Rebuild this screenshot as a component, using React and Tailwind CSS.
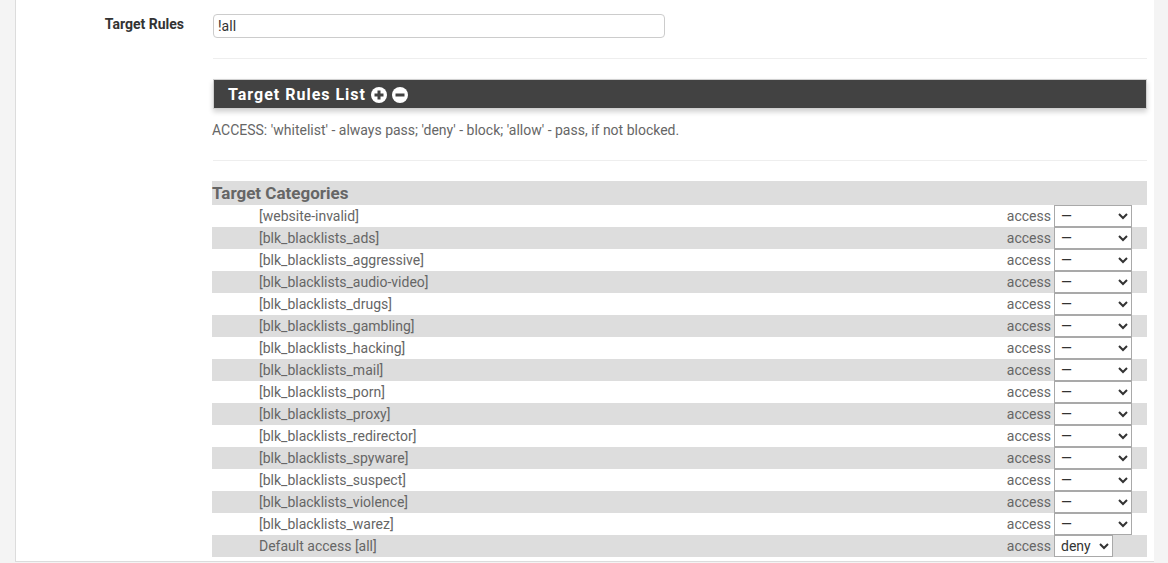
import React from 'react';

const categories = [
  'website-invalid',
  'blk_blacklists_ads',
  'blk_blacklists_aggressive',
  'blk_blacklists_audio-video',
  'blk_blacklists_drugs',
  'blk_blacklists_gambling',
  'blk_blacklists_hacking',
  'blk_blacklists_mail',
  'blk_blacklists_porn',
  'blk_blacklists_proxy',
  'blk_blacklists_redirector',
  'blk_blacklists_spyware',
  'blk_blacklists_suspect',
  'blk_blacklists_violence',
  'blk_blacklists_warez',
];

function CircleIcon({ minus }) {
  return (
    <svg width="16" height="16" viewBox="0 0 16 16">
      <circle cx="8" cy="8" r="8" fill="#fff" />
      <rect x="3.5" y="6.5" width="9" height="3" fill="#424242" />
      {!minus && <rect x="6.5" y="3.5" width="3" height="9" fill="#424242" />}
    </svg>
  );
}

function Row({ label, gray, children }) {
  return (
    <div className={`flex h-[22px] items-center ${gray ? 'bg-[#dddddd]' : 'bg-white'}`}>
      <span className="pl-[47px] pt-px flex-1 text-[14px] text-[#666]">{label}</span>
      <span className="pt-px text-[14px] text-[#666] mr-[3px]">access</span>
      <div className="w-[93px] flex">{children}</div>
    </div>
  );
}

export default function App() {
  return (
    <div className="flex h-[563px] bg-[#f4f4f4] overflow-hidden" style={{ fontFamily: 'Roboto, "Liberation Sans", sans-serif' }}>
      <div className="w-[15px] shrink-0" />
      <div className="w-[1139px] shrink-0 h-[562px] bg-white border-l border-b border-[#dcdcdc] pt-[14px] overflow-hidden">
        <div className="flex">
          <div className="w-[168px] text-right text-[14px] font-bold text-[#333]">Target Rules</div>
          <div className="ml-[29px] w-[934px]">
            <input
              defaultValue="!all"
              className="block w-[452px] h-[24px] border border-[#cccccc] rounded-[4px] px-[4px] text-[14px] text-[#333] outline-none"
            />
            <div className="mt-[20px] border-t border-[#eeeeee]" />
            <div className="mt-[20px] h-[30px] bg-[#424242] border border-[#d0d0d0] shadow-[0_3px_5px_rgba(0,0,0,0.18)] flex items-center pt-[2px] pl-[14px] gap-[5px]">
              <span className="text-white font-bold text-[16px] tracking-[1px]">Target Rules List</span>
              <CircleIcon />
              <CircleIcon minus />
            </div>
            <p className="-ml-px mt-[11px] text-[14px] text-[#666]">
              ACCESS: 'whitelist' - always pass; 'deny' - block; 'allow' - pass, if not blocked.
            </p>
            <div className="mt-[19px] border-t border-[#eeeeee]" />
            <div className="-ml-px mt-[20px] w-[935px]">
              <div className="h-[24px] bg-[#dddddd] flex items-center pt-px text-[17px] font-bold text-[#666]">Target Categories</div>
              {categories.map((c, i) => (
                <Row key={c} label={`[${c}]`} gray={i % 2 === 1}>
                  <select className="w-[78px] h-[22px] border border-[#a9a9a9] bg-white text-[14px] text-[#333] pl-[2px]">
                    <option>—</option>
                  </select>
                </Row>
              ))}
              <Row label="Default access [all]" gray>
                <select className="w-[59px] h-[22px] border border-[#a9a9a9] bg-white text-[14px] text-[#333] pl-[2px]">
                  <option>deny</option>
                </select>
              </Row>
            </div>
          </div>
        </div>
      </div>
    </div>
  );
}
